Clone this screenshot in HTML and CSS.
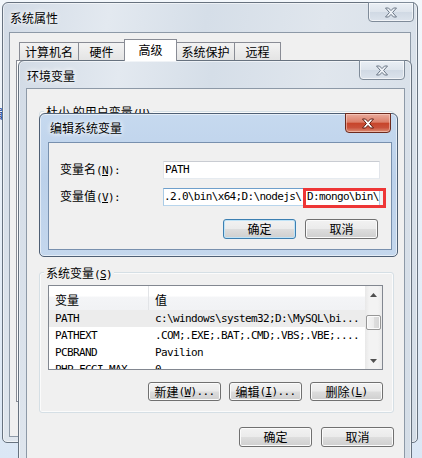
FILE: index.html
```html
<!DOCTYPE html>
<html>
<head>
<meta charset="utf-8">
<link rel="stylesheet" href="styles.css">
</head>
<body>
<span class="desk-glyph">辑</span>

<div class="win win1 inactive">
  <div class="titlebar"><span class="title">系统属性</span></div>
  <div class="close">
    <svg width="14" height="11" viewBox="0 0 14 11"><path d="M1.5 1H4.5L7 3.6L9.5 1H12.5L8.6 5.5L12.5 10H9.5L7 7.4L4.5 10H1.5L5.4 5.5Z"/></svg>
  </div>
  <div class="client">
    <div class="tabs">
      <span class="tab t1">计算机名</span>
      <span class="tab t2">硬件</span>
      <span class="tab t3 sel">高级</span>
      <span class="tab t4">系统保护</span>
      <span class="tab t5">远程</span>
    </div>
    <div class="tabpanel"></div>
  </div>
</div>

<div class="win win2 inactive">
  <div class="titlebar"><span class="title">环境变量</span></div>
  <div class="close">
    <svg width="14" height="11" viewBox="0 0 14 11"><path d="M1.5 1H4.5L7 3.6L9.5 1H12.5L8.6 5.5L12.5 10H9.5L7 7.4L4.5 10H1.5L5.4 5.5Z"/></svg>
  </div>
  <div class="client">
    <div class="group user">
      <span class="group-label">杜小 的用户变量<span class="m">(<u>U</u>)</span></span>
    </div>
    <div class="group sys">
      <span class="group-label">系统变量<span class="m">(<u>S</u>)</span></span>
      <div class="list">
        <div class="list-body">
          <div class="list-head">
            <span class="c1">变量</span>
            <span class="c2">值</span>
          </div>
          <div class="row sel"><span class="c1 m">PATH</span><span class="c2 m">c:\windows\system32;D:\MySQL\bi...</span></div>
          <div class="row"><span class="c1 m">PATHEXT</span><span class="c2 m">.COM;.EXE;.BAT;.CMD;.VBS;.VBE;....</span></div>
          <div class="row"><span class="c1 m">PCBRAND</span><span class="c2 m">Pavilion</span></div>
          <div class="row"><span class="c1 m">PHP_FCGI_MAX</span><span class="c2 m">0</span></div>
        </div>
        <div class="scrollbar">
          <div class="sb-btn"><svg width="7" height="4" viewBox="0 0 7 4"><path d="M0 4L3.5 0L7 4Z"/></svg></div>
          <div class="sb-track"><div class="sb-thumb"></div></div>
          <div class="sb-btn"><svg width="7" height="4" viewBox="0 0 7 4"><path d="M0 0L7 0L3.5 4Z"/></svg></div>
        </div>
      </div>
      <div class="btnrow">
        <span class="btn small">新建<span class="m">(<u>W</u>)...</span></span>
        <span class="btn small">编辑<span class="m">(<u>I</u>)...</span></span>
        <span class="btn small">删除<span class="m">(<u>L</u>)</span></span>
      </div>
    </div>
    <div class="dlg-buttons">
      <span class="btn">确定</span>
      <span class="btn">取消</span>
    </div>
  </div>
</div>

<div class="win win3 active">
  <div class="titlebar"><span class="title">编辑系统变量</span></div>
  <div class="close red">
    <svg width="14" height="11" viewBox="0 0 14 11"><path d="M1.5 1H4.5L7 3.6L9.5 1H12.5L8.6 5.5L12.5 10H9.5L7 7.4L4.5 10H1.5L5.4 5.5Z"/></svg>
  </div>
  <div class="client">
    <div class="form">
      <div class="field">
        <span class="label">变量名<span class="m">(<u>N</u>):</span></span>
        <span class="input"><span class="m">PATH</span></span>
      </div>
      <div class="field">
        <span class="label">变量值<span class="m">(<u>V</u>):</span></span>
        <span class="input focus"><span class="m">.2.0\bin\x64;D:\nodejs\;D:mongo\bin\</span></span>
      </div>
      <div class="form-buttons">
        <span class="btn default">确定</span>
        <span class="btn">取消</span>
      </div>
    </div>
  </div>
</div>

<div class="highlight"></div>
</body>
</html>
```

FILE: styles.css
```css
* { box-sizing: border-box; margin: 0; padding: 0; }

html, body { width: 422px; height: 458px; overflow: hidden; }

body {
  position: relative;
  background: linear-gradient(#f3f7fb, #dbe7f5);
  font-family: "Noto Sans CJK SC", "Noto Sans", sans-serif;
  font-size: 12px;
  line-height: 16px;
  color: #000;
}

.m {
  font-family: "DejaVu Sans Mono", "Liberation Mono", monospace;
  font-size: 11px;
  letter-spacing: -0.62px;
}

u { text-decoration: underline; text-underline-offset: 1px; }

.desk-glyph {
  position: absolute;
  left: -9px;
  top: 106px;
  color: #23439a;
  font-size: 12px;
}

/* ---------- windows ---------- */
.win {
  position: absolute;
  display: flex;
  flex-direction: column;
  border: 1px solid #67727f;
  border-radius: 6px 6px 5px 5px;
  box-shadow: inset 0 0 0 1px rgba(255, 255, 255, 0.55);
}

.inactive {
  background: linear-gradient(100deg, #d2dbe6 0%, #e3e9f0 22%, #d5dee8 42%, #e0e6ed 66%, #d4dde7 100%);
}

.active {
  background: linear-gradient(180deg, #c6d9ef 0%, #bcd1ea 45%, #c4d7ed 100%);
  border-color: #4e5f74;
}

.titlebar {
  flex: none;
  display: flex;
  align-items: center;
}

.title {
  text-shadow: 0 0 4px #fff, 0 0 6px #fff;
  white-space: nowrap;
}

.client {
  flex: 1;
  min-height: 0;
  display: flex;
  flex-direction: column;
  background: #f0f0f0;
  border: 1px solid #8d99a7;
}

.active .client { border-color: #7890ae; }

.close {
  position: absolute;
  top: -1px;
  width: 46px;
  height: 20px;
  display: flex;
  align-items: center;
  justify-content: center;
  border: 1px solid #7f8b99;
  border-radius: 0 0 4px 4px;
  background: linear-gradient(#eaeff5 0%, #dde4ec 50%, #d0d9e4 51%, #dce3ec 100%);
  box-shadow: inset 0 0 0 1px rgba(255, 255, 255, 0.6);
}

.close svg path { fill: #eef2f7; stroke: #6c7887; stroke-width: 1; stroke-linejoin: round; }

.close.red {
  border-color: #6d2a1e;
  background: linear-gradient(#e9ab9d 0%, #dc7f69 45%, #c7452b 52%, #c9503a 75%, #dc8f76 100%);
  box-shadow: inset 0 0 0 1px rgba(255, 220, 210, 0.5);
}

.close.red svg path { fill: #fff; stroke: #5e1b10; }

/* window 1 */
.win1 {
  left: 2px;
  top: 2px;
  width: 416px;
  height: 441px;
  padding: 0 6px 5px 6px;
}

.win1 .titlebar { height: 29px; padding-left: 1px; }
.win1 .close { right: 3px; }

.tabs {
  display: flex;
  align-items: flex-end;
  height: 27px;
  padding-left: 9px;
}

.tab {
  height: 18px;
  display: flex;
  align-items: center;
  justify-content: center;
  border: 1px solid #898c95;
  border-bottom: none;
  background: linear-gradient(#f3f3f3, #e4e4e4);
  margin-left: -1px;
  white-space: nowrap;
  padding-top: 1px;
}

.tab.t1 { width: 60px; margin-left: 0; }
.tab.t2 { width: 47px; }
.tab.t3 { width: 53px; }
.tab.t4 { width: 59px; }
.tab.t5 { width: 47px; }

.tab.sel {
  height: 22px;
  margin-bottom: -1px;
  background: #fff;
  position: relative;
  z-index: 1;
  padding-bottom: 3px;
}

.tabpanel {
  height: 342px;
  margin: 0 6px 0 6px;
  background: #fff;
  border: 1px solid #898c95;
}

/* window 2 */
.win2 {
  left: 18px;
  top: 60px;
  width: 394px;
  height: 410px;
  padding: 0 6px 6px 7px;
}

.win2 .titlebar { height: 27px; padding: 3px 0 0 1px; }
.win2 .close { right: 6px; }

.group {
  display: flex;
  flex-direction: column;
  border: 1px solid #d5dfe5;
  border-radius: 3px;
  box-shadow: inset 0 0 0 1px #fbfbfb;
}

.group-label {
  align-self: flex-start;
  height: 16px;
  margin: -8px 0 0 4px;
  padding: 0 2px;
  background: #f0f0f0;
  white-space: nowrap;
}

.group.user {
  height: 143px;
  margin: 22px 10px 0 12px;
}

.group.sys {
  margin: 18px 10px 0 12px;
  padding: 0 10px 11px 8px;
}

.group.sys .group-label { margin-left: -4px; }

.list {
  height: 85px;
  margin-top: 4px;
  display: flex;
  background: #fff;
  border: 1px solid #828790;
  overflow: hidden;
}

.list-body {
  flex: 1;
  display: flex;
  flex-direction: column;
}

.list-head {
  flex: none;
  display: flex;
  height: 24px;
  background: linear-gradient(#ffffff 0%, #ffffff 42%, #f4f5f7 46%, #f1f2f4 100%);
}

.list-head span { padding: 6px 0 0 6px; }

.list-head .c1 { border-right: 1px solid #e2e4e7; }

.c1 { width: 100px; flex: none; padding-left: 6px; white-space: nowrap; }
.c2 { flex: 1; padding-left: 6px; white-space: nowrap; overflow: hidden; }

.row {
  flex: none;
  display: flex;
  height: 17px;
  line-height: 17px;
}

.row.sel { background: #ececec; }

.scrollbar {
  width: 17px;
  flex: none;
  display: flex;
  flex-direction: column;
  background: linear-gradient(90deg, #e8e8e8 0%, #f3f3f3 25%, #f3f3f3 75%, #eaeaea 100%);
}

.sb-btn {
  height: 17px;
  flex: none;
  display: flex;
  align-items: center;
  justify-content: center;
}

.sb-btn svg path { fill: #505050; }

.sb-track { flex: 1; }

.sb-thumb {
  width: 15px;
  height: 15px;
  margin: 12px 0 0 1px;
  border: 1px solid #979797;
  border-radius: 2px;
  background: linear-gradient(90deg, #f5f5f5 0%, #ececec 50%, #dedede 51%, #d6d6d6 100%);
  box-shadow: inset 0 0 0 1px #fbfbfb;
}

.btnrow {
  display: flex;
  justify-content: flex-end;
  gap: 8px;
  margin-top: 12px;
}

.btn {
  width: 73px;
  height: 20px;
  display: flex;
  align-items: center;
  justify-content: center;
  border: 1px solid #707070;
  border-radius: 3px;
  background: linear-gradient(#f2f2f2 0%, #ebebeb 48%, #dddddd 52%, #cfcfcf 100%);
  box-shadow: inset 0 0 0 1px #fbfbfb;
  white-space: nowrap;
}

.btn.small { height: 19px; }

.btn.default {
  border-color: #3c7fb1;
  box-shadow: inset 0 0 0 1px #bfe3f7;
}

.dlg-buttons {
  display: flex;
  justify-content: flex-end;
  gap: 9px;
  margin-top: 14px;
  padding-right: 10px;
}

/* window 3 */
.win3 {
  left: 39px;
  top: 113px;
  width: 359px;
  height: 144px;
  padding: 0 5px 6px 8px;
}

.win3 .titlebar { height: 28px; padding-left: 2px; }
.win3 .close { right: 6px; }

.form {
  display: flex;
  flex-direction: column;
  gap: 9px;
  padding: 18px 11px 0 11px;
}

.field {
  display: flex;
  align-items: center;
}

.label { flex: 1; white-space: nowrap; }

.input {
  width: 217px;
  height: 18px;
  display: flex;
  align-items: center;
  padding-left: 1px;
  background: #fff;
  border: 1px solid;
  border-color: #c9ccd2 #e2e5ea #e6ebf0 #e2e5ea;
  overflow: hidden;
  white-space: nowrap;
}

.input.focus {
  padding-left: 0;
  border-color: #6f9fcb #b3d0ea #b8d5ec #a9cbe6;
}

.input.focus .m { letter-spacing: -0.66px; }

.form-buttons {
  display: flex;
  justify-content: flex-end;
  gap: 9px;
  margin-top: 4px;
  padding-right: 2px;
}

/* annotation */
.highlight {
  position: absolute;
  left: 303px;
  top: 188px;
  width: 83px;
  height: 20px;
  border: 3px solid #ee3636;
}
```
